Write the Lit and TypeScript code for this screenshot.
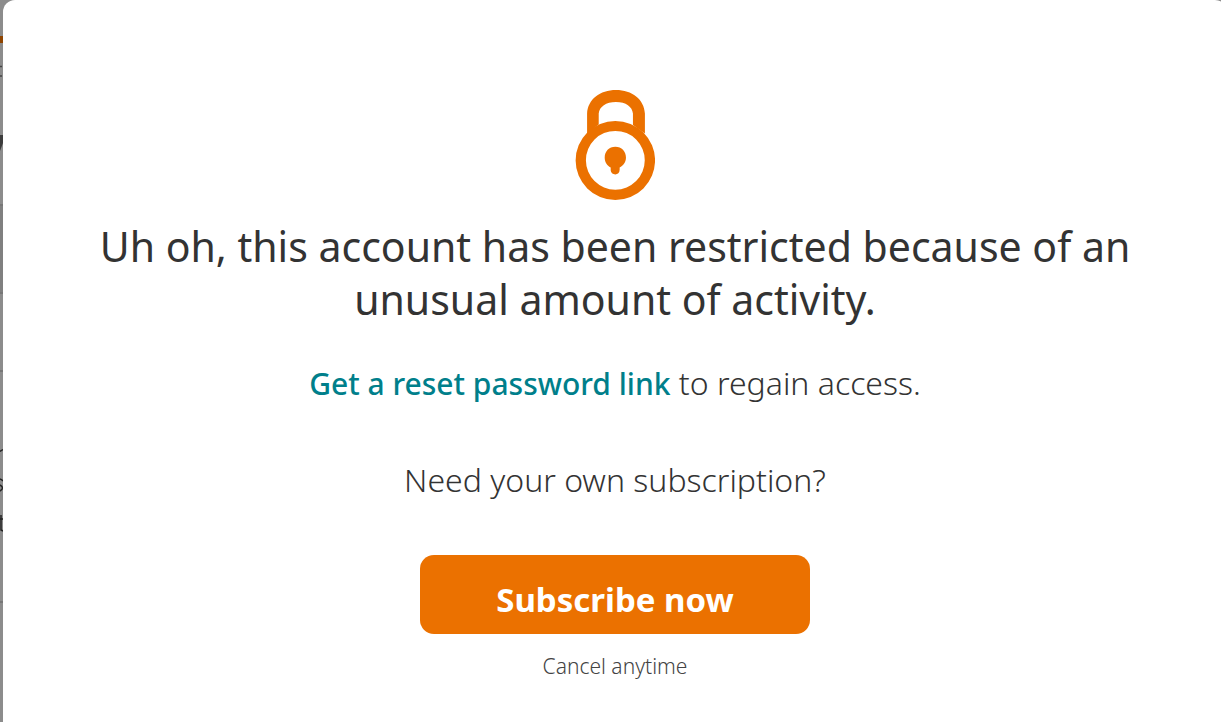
import { LitElement, html, css } from "lit";
import { customElement } from "lit/decorators.js";

@customElement("page-edge")
class PageEdge extends LitElement {
  static styles = css`
    :host {
      position: absolute;
      inset: 0;
      overflow: hidden;
      background: #8c8c8c;
    }
    .art {
      display: block;
      width: 16px;
      height: 722px;
    }
  `;

  render() {
    return html`
      <svg class="art" viewBox="0 0 16 722" aria-hidden="true">
        <rect y="205" width="16" height="87" fill="#808080" />
        <rect y="36" width="16" height="7" fill="#8f4400" />
        <path d="M0 66.500h2M0 76h2" stroke="#444" stroke-width="1.500" />
        <path d="M0 135h3v8l-3 8z" fill="#3c3c3c" />
        <path d="M0 205h16M0 293h16M0 371h16M0 602h16" stroke="#777" stroke-width="2" />
        <path d="M0 451.500l3-2M0 479q2 1 3 2M0 485q5 3 0 6M1 515v15l2 1M0 519h3" stroke="#222" stroke-width="1.500" fill="none" />
      </svg>
    `;
  }
}

@customElement("lock-icon")
class LockIcon extends LitElement {
  static styles = css`
    :host {
      display: block;
    }
    .lock {
      display: block;
      width: 80px;
      height: 110px;
    }
  `;

  render() {
    return html`
      <svg class="lock" viewBox="30 29 240 331" fill="#eb7100" aria-hidden="true">
        <path
          fill-rule="evenodd"
          d="M66 160V100C68 57 105 29 153 29S238 57 240 100V160L204 134V100C202 79 183 65 153 65S103 79 101 100V133L66 160Z"
        />
        <path
          fill-rule="evenodd"
          d="M151 122a119.500 119 0 1 1 0 238a119.500 119 0 1 1 0-238ZM151 152a88.500 88.500 0 1 0 0 177a88.500 88.500 0 1 0 0-177Z"
        />
        <path
          d="M151 200C170 200 183 214 183 232C183 246 175 257 164 262V269C164 278 158 283 151 283S137 278 137 269V262C126 256 119 246 119 232C119 214 132 200 151 200Z"
        />
      </svg>
    `;
  }
}

@customElement("app-root")
class AppRoot extends LitElement {
  static styles = css`
    :host {
      display: block;
      position: relative;
      min-height: 100vh;
      overflow: hidden;
      font-family: "Noto Sans", sans-serif;
      color: #333;
    }
    .dialog {
      position: relative;
      box-sizing: border-box;
      display: flex;
      flex-direction: column;
      align-items: center;
      min-height: 100vh;
      margin: 0 -6px 0 3px;
      padding: 90px 80px 40px;
      border-radius: 12px 12px 0 0;
      background: #fff;
      text-align: center;
    }
    .title {
      margin: 20px 0 0;
      font-size: 41px;
      line-height: 53px;
      font-weight: 400;
    }
    .text {
      margin: 35px 0 0;
      font-size: 32px;
      line-height: 44px;
      font-weight: 300;
    }
    .question {
      margin-top: 52px;
    }
    .link {
      color: #007f8b;
      font-size: 30px;
      font-weight: 500;
      text-decoration: none;
    }
    .subscribe {
      box-sizing: border-box;
      width: 390px;
      max-width: 100%;
      margin: 53px 0 0;
      padding: 22px 20px 12px;
      border: 0;
      border-radius: 14px;
      background: #eb7100;
      color: #fff;
      font: 700 33px/45px "Noto Sans", sans-serif;
      cursor: pointer;
    }
    .note {
      margin: 17px 0 0;
      font-size: 21px;
      line-height: 30px;
      font-weight: 300;
      color: #444;
    }
  `;

  render() {
    return html`
      <page-edge></page-edge>
      <main class="dialog" role="dialog" aria-labelledby="title">
        <lock-icon></lock-icon>
        <h1 class="title" id="title">
          Uh oh, this account has been restricted because of an unusual amount of activity.
        </h1>
        <p class="text"><a class="link" href="#reset">Get a reset password link</a> to regain access.</p>
        <p class="text question">Need your own subscription?</p>
        <button class="subscribe" type="button">Subscribe now</button>
        <p class="note">Cancel anytime</p>
      </main>
    `;
  }
}
